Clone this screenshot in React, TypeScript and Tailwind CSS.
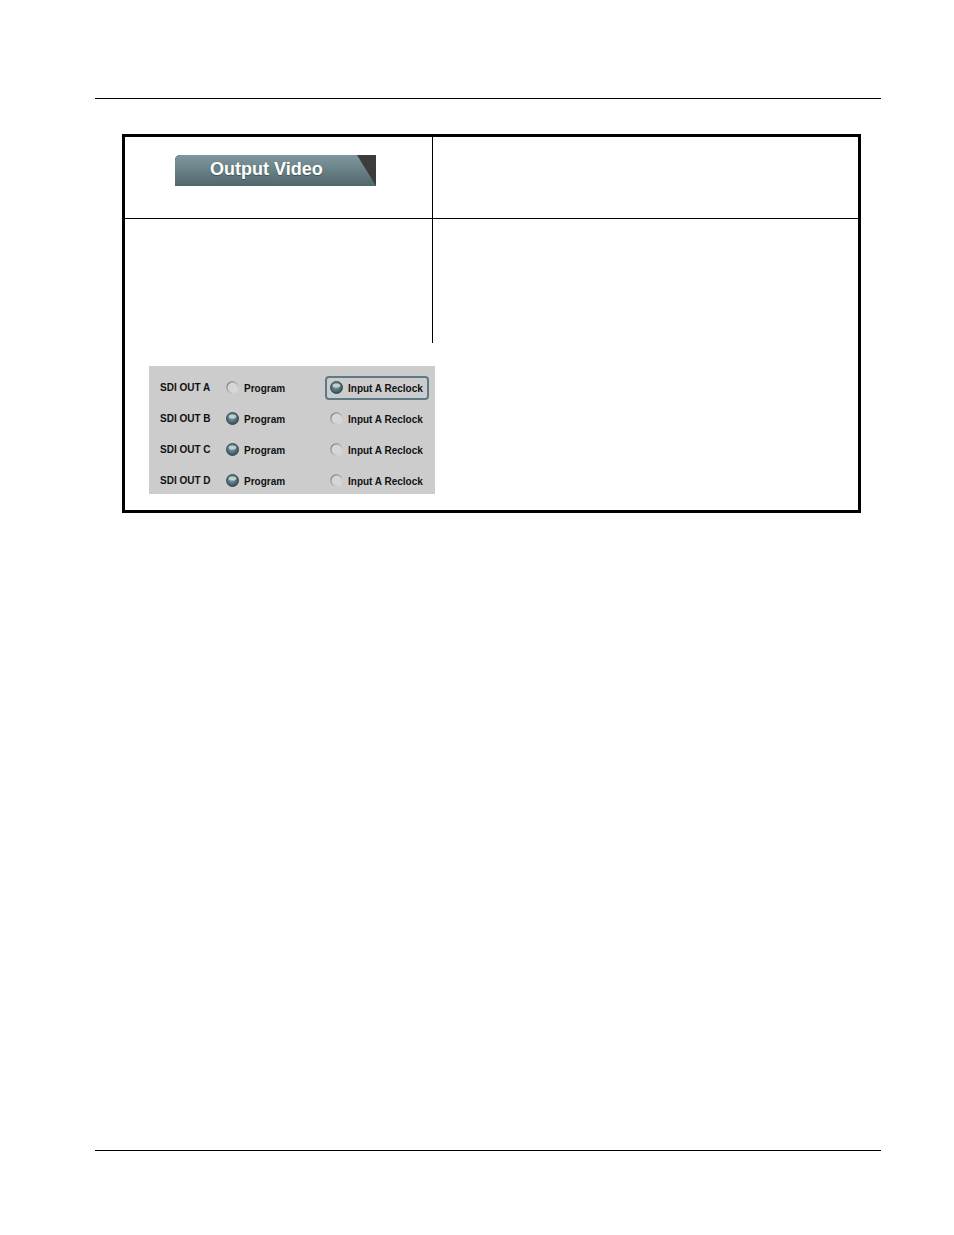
import React, { useId } from "react";

function RadioOff() {
  const id = useId().replace(/:/g, "");
  return (
    <svg width="13" height="13" viewBox="0 0 13 13" className="shrink-0">
      <defs>
        <linearGradient id={`off${id}`} x1="0" y1="0" x2="1" y2="1">
          <stop offset="0" stopColor="#6e6e6e" />
          <stop offset="0.45" stopColor="#a8a8a8" />
          <stop offset="1" stopColor="#ececec" />
        </linearGradient>
      </defs>
      <circle cx="6.5" cy="6.5" r="5.6" fill="#d6d6d6" stroke={`url(#off${id})`} strokeWidth="1.2" />
    </svg>
  );
}

function RadioOn() {
  const id = useId().replace(/:/g, "");
  return (
    <svg width="13" height="13" viewBox="0 0 13 13" className="shrink-0">
      <defs>
        <radialGradient id={`on${id}`} cx="0.45" cy="0.4" r="0.7">
          <stop offset="0" stopColor="#8ea5ad" />
          <stop offset="0.5" stopColor="#56707a" />
          <stop offset="1" stopColor="#253940" />
        </radialGradient>
      </defs>
      <circle cx="6.5" cy="6.5" r="6.2" fill={`url(#on${id})`} />
      <ellipse cx="6.5" cy="4.5" rx="3.8" ry="2" fill="#d3dee2" opacity="0.8" />
      <circle cx="6.5" cy="6.5" r="6" fill="none" stroke="#34484f" strokeWidth="0.7" />
    </svg>
  );
}

const rows = [
  { label: "SDI OUT A", program: false },
  { label: "SDI OUT B", program: true },
  { label: "SDI OUT C", program: true },
  { label: "SDI OUT D", program: true },
];

export default function App() {
  return (
    <div
      className="w-[954px] h-[1235px] bg-white flex flex-col"
      style={{ fontFamily: '"Liberation Sans", Arial, sans-serif' }}
    >
      <div className="h-[98px] shrink-0" />
      <div className="ml-[95px] w-[786px] h-px bg-black shrink-0" />
      <div className="h-[35px] shrink-0" />

      <div className="ml-[122px] w-[739px] h-[379px] border-[3px] border-black shrink-0 flex flex-col">
        {/* Row 1 */}
        <div className="flex h-[82px] border-b border-black">
          <div className="w-[308px] border-r border-black pt-[18px] pl-[50px]">
            <div className="relative w-[201px] h-[31px] bg-[#3c3c3c] rounded-tl-[5px] overflow-hidden">
              <div className="absolute inset-0 rounded-tl-[5px] bg-[linear-gradient(180deg,#80989d_0%,#6a8388_45%,#50676c_100%)] [clip-path:polygon(0_0,182px_0,201px_100%,0_100%)]" />
              <div className="relative h-full flex items-center pl-[35px] pb-[2px] text-[18px] font-bold text-white [text-shadow:0_1px_1px_rgba(0,0,0,0.35)]">
                Output Video
              </div>
            </div>
          </div>
          <div className="flex-1" />
        </div>

        {/* Row 2 */}
        <div className="flex h-[124px]">
          <div className="w-[308px] border-r border-black" />
          <div className="flex-1" />
        </div>

        {/* Panel area */}
        <div className="flex-1 pt-[23px] pl-[24px]">
          <div className="w-[286px] h-[128px] bg-[#cccccc] pt-[6px] text-[10px] font-bold text-[#111]">
            {rows.map((r, i) => (
              <div key={r.label} className="relative h-[31px] flex items-center">
                <div className="w-[77px] pl-[11px]">{r.label}</div>
                <div className="w-[104px] flex items-center gap-[5px]">
                  {r.program ? <RadioOn /> : <RadioOff />}
                  <span className="pt-px">Program</span>
                </div>
                <div className="flex items-center gap-[5px]">
                  {r.program ? <RadioOff /> : <RadioOn />}
                  <span className="pt-px">Input A Reclock</span>
                </div>
                {i === 0 && (
                  <div className="absolute left-[176px] top-[4px] w-[104px] h-[24px] border-2 border-[#5d7a86] rounded-[4px]" />
                )}
              </div>
            ))}
          </div>
        </div>
      </div>

      <div className="h-[637px] shrink-0" />
      <div className="ml-[95px] w-[786px] h-px bg-black shrink-0" />
    </div>
  );
}
